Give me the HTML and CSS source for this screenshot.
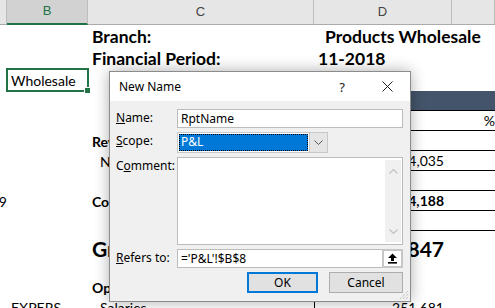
FILE: index.html
```html
<!DOCTYPE html>
<html lang="en">

<head>
    <meta charset="UTF-8">
    <title>New Name</title>
    <link rel="stylesheet" href="styles.css">
</head>

<body>
    <div class="sheet">
        <div class="row head">
            <div class="hc"></div>
            <div class="hc sel">B</div>
            <div class="hc">C</div>
            <div class="hc">D</div>
            <div class="hc"></div>
        </div>
        <div class="row h22">
            <div></div><div></div>
            <div class="cell big">Branch:</div>
            <div class="cell big pw">Products Wholesale</div>
            <div></div>
        </div>
        <div class="row h22">
            <div></div><div></div>
            <div class="cell big">Financial Period:</div>
            <div class="cell big">11-2018</div>
            <div></div>
        </div>
        <div class="row h22">
            <div></div>
            <div class="cell active">Wholesale</div>
            <div></div><div></div><div></div>
        </div>
        <div class="row h20">
            <div></div><div></div><div></div>
            <div class="bar"></div>
            <div class="bar"></div>
        </div>
        <div class="row h20">
            <div></div><div></div><div></div>
            <div class="ln"></div>
            <div class="ln cell pct">%</div>
        </div>
        <div class="row h20">
            <div></div><div></div>
            <div class="cell b">Revenue</div>
            <div class="ln"></div>
            <div class="ln"></div>
        </div>
        <div class="row h20">
            <div></div><div></div>
            <div class="cell ind">Net Sales</div>
            <div class="ln cell num">1,064,035</div>
            <div class="ln"></div>
        </div>
        <div class="row h20">
            <div></div><div></div><div></div>
            <div class="ln"></div>
            <div class="ln"></div>
        </div>
        <div class="row h20">
            <div class="cell num edge">49</div>
            <div></div>
            <div class="cell b">Cost of Sales</div>
            <div class="ln cell num b">774,188</div>
            <div class="ln"></div>
        </div>
        <div class="row h20">
            <div></div><div></div><div></div>
            <div class="ln"></div>
            <div class="ln"></div>
        </div>
        <div class="row h34">
            <div></div><div></div>
            <div class="cell b xl">Gross Profit</div>
            <div class="cell num b xl">289,847</div>
            <div></div>
        </div>
        <div class="row h12"></div>
        <div class="row h20">
            <div></div><div></div>
            <div class="cell b">Operating Expenses</div>
            <div></div><div></div>
        </div>
        <div class="row h20">
            <div></div>
            <div class="cell">EXPERS</div>
            <div class="cell ind">Salaries</div>
            <div class="cell num vl">251,681</div>
            <div></div>
        </div>
    </div>

    <div class="dialog">
        <div class="titlebar">
            <span class="title">New Name</span>
            <span class="tb-btn">?</span>
            <span class="tb-btn">
                <svg width="11" height="11" viewBox="0 0 11 11">
                    <path d="M0.5 0.5 L10.5 10.5 M10.5 0.5 L0.5 10.5" stroke="#222" stroke-width="1" />
                </svg>
            </span>
        </div>
        <div class="form">
            <label class="lbl"><u>N</u>ame:</label>
            <div class="field">RptName</div>

            <label class="lbl"><u>S</u>cope:</label>
            <div class="select">
                <div class="sel-val"><span>P&amp;L</span></div>
                <div class="sel-btn">
                    <svg width="9" height="5" viewBox="0 0 9 5">
                        <path d="M0.5 0.5 L4.5 4.5 L8.5 0.5" fill="none" stroke="#555" stroke-width="1" />
                    </svg>
                </div>
            </div>

            <label class="lbl">C<u>o</u>mment:</label>
            <div class="area">
                <div class="scroll">
                    <svg width="9" height="5" viewBox="0 0 9 5">
                        <path d="M0.5 4.5 L4.5 0.5 L8.5 4.5" fill="none" stroke="#c2c2c2" stroke-width="1.2" />
                    </svg>
                    <svg width="9" height="5" viewBox="0 0 9 5">
                        <path d="M0.5 0.5 L4.5 4.5 L8.5 0.5" fill="none" stroke="#c2c2c2" stroke-width="1.2" />
                    </svg>
                </div>
            </div>

            <label class="lbl"><u>R</u>efers to:</label>
            <div class="field refers">
                <span>='P&amp;L'!$B$8</span>
                <span class="collapse">
                    <svg width="11" height="11" viewBox="0 0 11 11">
                        <path d="M5.5 0.5 L10 5 L7 5 L7 8 L4 8 L4 5 L1 5 Z" fill="#000" />
                        <rect x="1" y="9" width="9" height="1.6" fill="#000" />
                    </svg>
                </span>
            </div>

            <div class="buttons">
                <button class="btn ok">OK</button>
                <button class="btn">Cancel</button>
            </div>
        </div>
        <svg class="grip" width="10" height="10" viewBox="0 0 10 10">
            <path d="M9 1 L1 9 M9 4 L4 9 M9 7 L7 9" stroke="#b4b4b4" stroke-width="1" stroke-dasharray="1 1" />
        </svg>
    </div>
</body>

</html>
```

FILE: styles.css
```css
html,
body {
    margin: 0;
    padding: 0;
    overflow: hidden;
    background: #fff;
}

.sheet {
    width: 495px;
    height: 308px;
    overflow: hidden;
    font-family: Lato, "Open Sans", sans-serif;
    font-size: 14px;
    color: #000;
}

.row {
    display: grid;
    grid-template-columns: 7px 81px 226px 138px 1fr;
}

.row > div {
    box-sizing: border-box;
    min-width: 0;
}

.head {
    height: 25px;
    background: #e6e6e6;
    border-bottom: 1px solid #ababab;
    box-sizing: border-box;
}

.hc {
    border-right: 1px solid #bdbdbd;
    text-align: center;
    line-height: 24px;
    font-family: "Liberation Sans", Arial, sans-serif;
    font-size: 13px;
    color: #444;
}

.hc.sel {
    background: #d2d2d2;
    color: #217346;
    border-bottom: 2px solid #217346;
    line-height: 22px;
    margin-bottom: -1px;
}

.h22 {
    height: 22px;
}

.h20 {
    height: 20px;
}

.h34 {
    height: 34px;
}

.h12 {
    height: 12px;
}

.cell {
    white-space: nowrap;
    padding-left: 4px;
    display: flex;
    align-items: center;
}

.big {
    font-size: 17.5px;
    font-weight: 700;
}

.pw {
    padding-left: 11px;
}

.active {
    position: relative;
    outline: 2px solid #217346;
    outline-offset: -1px;
}

.active::after {
    content: "";
    position: absolute;
    right: -3px;
    bottom: -3px;
    width: 5px;
    height: 5px;
    background: #217346;
    border: 1px solid #fff;
}

.bar {
    background: #44546a;
    border-bottom: 1px solid #000;
}

.ln {
    border-bottom: 1px solid #000;
}

.pct {
    justify-content: flex-end;
    padding-right: 0;
}

.b {
    font-weight: 700;
}

.ind {
    padding-left: 12px;
}

.num {
    justify-content: flex-end;
    padding-right: 8px;
    overflow: hidden;
}

.num.edge {
    padding-right: 0;
}

.xl {
    font-size: 21px;
}

.vl {
    border-left: 1px solid #000;
}

/* dialog */

.dialog {
    position: absolute;
    left: 109px;
    top: 71px;
    width: 302px;
    height: 231px;
    box-sizing: border-box;
    border: 1px solid #8c8c8c;
    background: #f0f0f0;
    box-shadow: 0 0 14px rgba(0, 0, 0, 0.32);
    font-family: "Noto Sans", "Open Sans", sans-serif;
    font-size: 12px;
    color: #000;
}

.titlebar {
    height: 29px;
    background: #fff;
    display: flex;
    align-items: center;
    padding: 0 8px 0 9px;
}

.title {
    flex: 1;
}

.tb-btn {
    width: 30px;
    display: flex;
    justify-content: center;
    font-size: 13px;
    color: #222;
}

.tb-btn + .tb-btn {
    margin-left: 15px;
}

.form {
    display: grid;
    grid-template-columns: 61px 226px;
    grid-template-rows: 19px 21px 88px 19px 21px;
    row-gap: 4px;
    padding: 8px 0 0 6px;
}

.lbl {
    line-height: 17px;
}

.field {
    box-sizing: border-box;
    background: #fff;
    border: 1px solid #bcbcbc;
    padding-left: 3px;
    line-height: 17px;
    display: flex;
    align-items: center;
}

.select {
    display: flex;
    box-sizing: border-box;
    width: 151px;
    border: 1px solid #c8c8c8;
    background: #fff;
}

.sel-val {
    flex: 1;
    padding: 1px;
}

.sel-val span {
    display: block;
    height: 100%;
    box-sizing: border-box;
    background: #0078d7;
    color: #fff;
    padding-left: 2px;
    line-height: 15px;
    outline: 1px dotted #000;
    outline-offset: -1px;
}

.sel-btn {
    width: 17px;
    background: #e5e5e5;
    border-left: 1px solid #c8c8c8;
    display: flex;
    align-items: center;
    justify-content: center;
}

.area {
    box-sizing: border-box;
    background: #fff;
    border: 1px solid #bcbcbc;
    display: flex;
    justify-content: flex-end;
    padding: 2px 1px 2px 0;
}

.scroll {
    width: 16px;
    background: #f0f0f0;
    display: flex;
    flex-direction: column;
    justify-content: space-between;
    align-items: center;
    padding: 9px 0 8px;
}

.refers {
    justify-content: space-between;
    padding-right: 0;
}

.collapse {
    box-sizing: border-box;
    width: 21px;
    height: 19px;
    margin: -1px -1px -1px 0;
    border: 2px solid #c6c6c6;
    background: #fff;
    display: flex;
    align-items: center;
    justify-content: center;
}

.buttons {
    grid-column: 1 / 3;
    display: flex;
    justify-content: flex-end;
    gap: 11px;
}

.btn {
    box-sizing: border-box;
    width: 74px;
    height: 21px;
    background: #e1e1e1;
    border: 1px solid #adadad;
    font: inherit;
    color: #000;
    padding: 0;
}

.btn.ok {
    width: 71px;
    border: 2px solid #0078d7;
}

.grip {
    position: absolute;
    right: 1px;
    bottom: 1px;
}
```
